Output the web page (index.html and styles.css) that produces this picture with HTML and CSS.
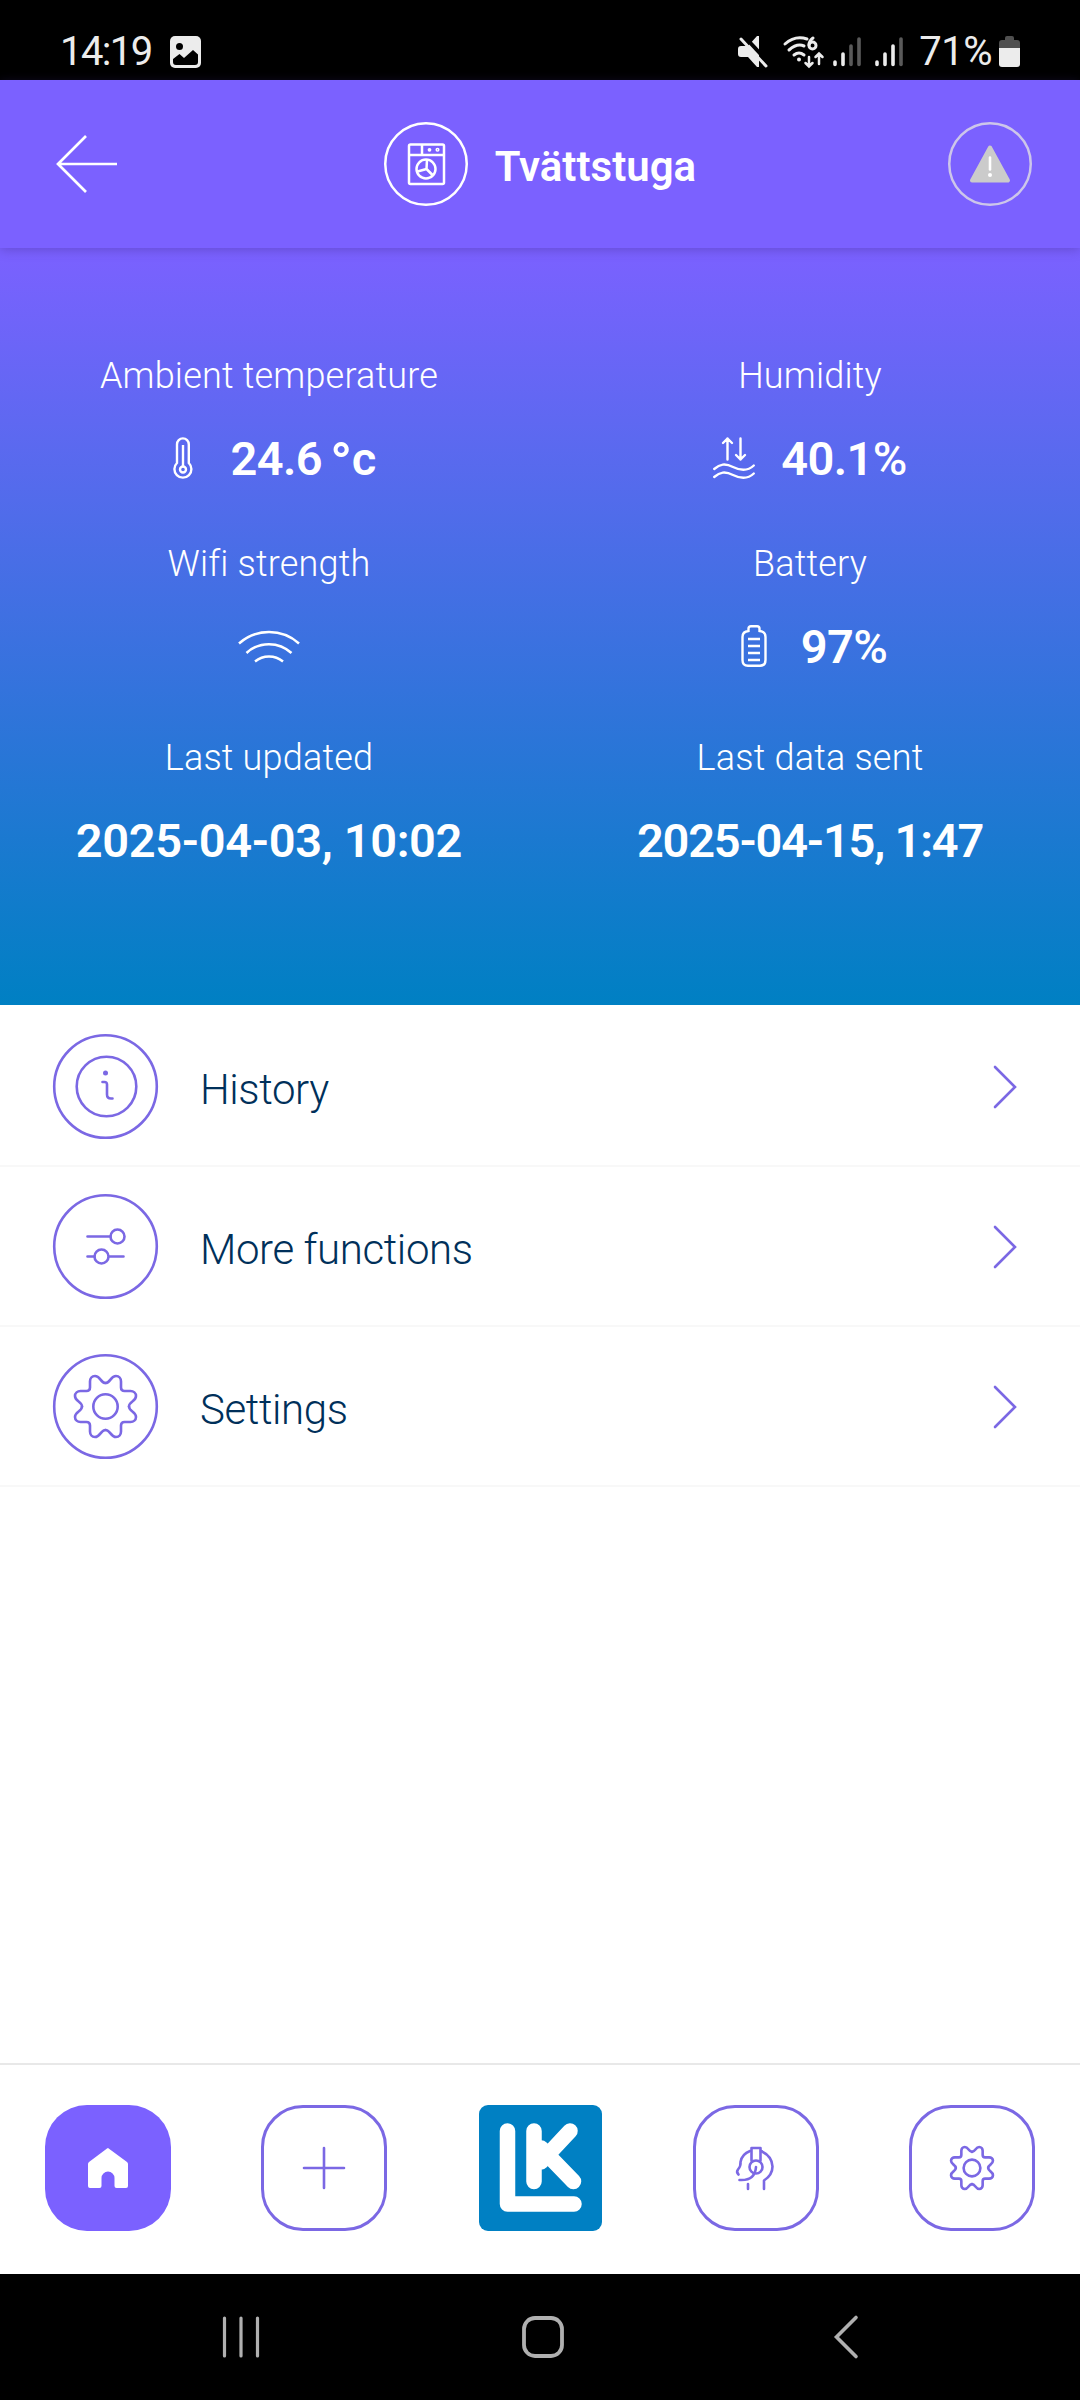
FILE: index.html
```
<!DOCTYPE html>
<html lang="en">
<head>
    <meta charset="UTF-8">
    <meta name="viewport" content="width=device-width, initial-scale=1.0">
    <title>Tvättstuga</title>
    <link rel="stylesheet" href="styles.css">
</head>
<body>

<!-- Shared gear outline -->
<svg class="defs" width="0" height="0">
    <defs>
        <path id="gear-side" d="M0-23.5C-5-23.5-5-30.5-10.5-30.5C-13.5-30.5-15.5-28-15.5-25V-19Q-15.5-15.5-19-15.5H-25C-28-15.5-30.5-13.5-30.5-10.5C-30.5-5-23.5-5-23.5 0"/>
        <g id="gear">
            <use href="#gear-side"/>
            <use href="#gear-side" transform="rotate(90)"/>
            <use href="#gear-side" transform="rotate(180)"/>
            <use href="#gear-side" transform="rotate(270)"/>
            <circle r="12.2"/>
        </g>
    </defs>
</svg>

<!-- Status bar -->
<div class="status-bar">
    <span class="clock">14:19</span>
    <svg class="picture" width="32" height="32" viewBox="0 0 32 32">
        <rect width="31" height="32" rx="5" fill="#ececec"/>
        <circle cx="9.500" cy="10.500" r="3.500" fill="#000"/>
        <path d="M3 23L9.500 18L14 22L23 14L28 18.500V26Q28 29 25 29H6Q3 29 3 26Z" fill="#000"/>
    </svg>
    <div class="status-icons">
        <svg class="mute" width="30" height="32" viewBox="0 0 30 32">
            <path d="M21 0V31H19L10 21H3Q0 21 0 18V13Q0 10 3 10H10L19 0Z" fill="#ececec"/>
            <path d="M5-1L31 27" stroke="#000" stroke-width="4"/>
            <path d="M3 3L28 30" stroke="#ececec" stroke-width="3" stroke-linecap="round"/>
        </svg>
        <svg class="wifi6" width="42" height="32" viewBox="0 0 42 32" fill="none" stroke="#ececec" stroke-width="3" stroke-linecap="round">
            <path d="M2 8Q12-1 24 3M6 14Q14 7 21 10M11 19Q16 15 21 19"/>
            <circle cx="16" cy="23.500" r="1" stroke-width="2"/>
            <path d="M30 2Q26 5 26 9" />
            <circle cx="29.500" cy="9.500" r="3.500"/>
            <path d="M26 21V30M22.500 27L26 30.500L29.500 27M36 28V18M32.500 21L36 17.500L39.500 21" stroke-width="2.500"/>
        </svg>
        <svg class="signal" width="28" height="31" viewBox="0 0 28 31" stroke-width="3.600" stroke-linecap="round">
            <path d="M2 26V28.500M10 18V28.500" stroke="#ececec"/>
            <path d="M18 10V28.500M26 3V28.500" stroke="#5a5a5a"/>
        </svg>
        <svg class="signal second" width="28" height="31" viewBox="0 0 28 31" stroke-width="3.600" stroke-linecap="round">
            <path d="M2 26V28.500M10 18V28.500M18 10V28.500" stroke="#ececec"/>
            <path d="M26 3V28.500" stroke="#5a5a5a"/>
        </svg>
        <span class="percent">71%</span>
        <svg class="cell" width="21" height="31" viewBox="0 0 21 31">
            <path d="M6 2Q6 0 8 0H13Q15 0 15 2V4H18Q21 4 21 7V12H0V7Q0 4 3 4H6Z" fill="#505050"/>
            <path d="M0 12H21V28Q21 31 18 31H3Q0 31 0 28Z" fill="#ececec"/>
        </svg>
    </div>
</div>

<!-- App header -->
<header class="header">
    <svg class="back" width="62" height="60" viewBox="0 0 62 60" fill="none" stroke="#fff" stroke-width="2.700">
        <path d="M30 2L2 30L30 58M2 30H61"/>
    </svg>
    <div class="title">
        <svg width="84" height="84" viewBox="0 0 84 84" fill="none" stroke="#fff" stroke-width="2.500">
            <circle cx="42" cy="42" r="40.750"/>
            <rect x="25" y="22.500" width="35" height="39.500" rx="1.500"/>
            <path d="M25 33H60M38 22.500V33"/>
            <circle cx="45.500" cy="27.800" r=".9" stroke-width="2"/>
            <circle cx="53.500" cy="27.800" r="1.300" stroke-width="1.500"/>
            <circle cx="42" cy="47" r="9.500"/>
            <path d="M42.500 47L43 37.500M42.500 47L33.500 49.500M42.500 47L49 53.500"/>
        </svg>
        <h1>Tvättstuga</h1>
    </div>
    <svg class="alert" width="84" height="84" viewBox="0 0 84 84">
        <circle cx="42" cy="42" r="40.750" fill="none" stroke="#cdc6ea" stroke-width="2.500"/>
        <path d="M42 25.500L60 58.500H24Z" fill="#cbcbcb" stroke="#cbcbcb" stroke-width="4" stroke-linejoin="round"/>
        <path d="M42 35.500V47.500" stroke="#fff" stroke-width="2.600" stroke-linecap="round"/>
        <circle cx="42" cy="53" r="2" fill="#fff"/>
    </svg>
</header>

<!-- Sensor readings -->
<section class="readings">
    <div class="reading">
        <p class="label">Ambient temperature</p>
        <div class="value">
            <svg width="42" height="42" viewBox="-11 0 42 42" fill="none" stroke="#fff" stroke-width="2.400">
                <path d="M4 26V7.500A5.800 6 0 0 1 15.800 7.500V26A8.500 8.500 0 1 1 4 26Z"/>
                <path d="M10 8V29"/>
                <circle cx="10" cy="32.500" r="3"/>
            </svg>
            <span>24.6<span class="degree">°</span>c</span>
        </div>
    </div>
    <div class="reading">
        <p class="label">Humidity</p>
        <div class="value">
            <svg width="42" height="42" viewBox="0 0 42 42" fill="none" stroke="#fff" stroke-width="2.400" stroke-linecap="round" stroke-linejoin="round">
                <path d="M14.500 22.500V1.500M10 6L14.500 1.500L19 6M27.500 1.500V22.500M23 18L27.500 22.500L32 18"/>
                <path d="M1.200 32C7 27 12 26 20 30S35 34 40.800 28.500M1.200 40C7 35 12 34 20 38S35 42 40.800 36.500"/>
            </svg>
            <span>40.1<span class="pct">%</span></span>
        </div>
    </div>
    <div class="reading">
        <p class="label">Wifi strength</p>
        <div class="value">
            <svg width="62" height="34" viewBox="0 0 62 34" fill="none" stroke="#fff" stroke-width="2.500">
                <path d="M1 14.500A45 45 0 0 1 61 14.500M8.500 24A33 33 0 0 1 53.500 24M17 32.500A22 22 0 0 1 45 32.500"/>
            </svg>
        </div>
    </div>
    <div class="reading">
        <p class="label">Battery</p>
        <div class="value">
            <svg width="42" height="42" viewBox="-8 0 42 42" fill="none" stroke="#fff" stroke-width="2.400">
                <path d="M7.500 6V3.500Q7.500 1.200 10 1.200H16Q18.500 1.200 18.500 3.500V6Q24.500 6.500 24.500 12V35Q24.500 40.800 19 40.800H7Q1.500 40.800 1.500 35V12Q1.500 6.500 7.500 6Z"/>
                <path d="M7 14H19M7 21H19M7 28H19M7 35H19"/>
            </svg>
            <span>97<span class="pct">%</span></span>
        </div>
    </div>
    <div class="reading">
        <p class="label">Last updated</p>
        <div class="value date"><span>2025-04-03, 10:02</span></div>
    </div>
    <div class="reading">
        <p class="label">Last data sent</p>
        <div class="value date sent"><span>2025-04-15, 1:47</span></div>
    </div>
</section>

<!-- Menu -->
<main class="menu">
    <div class="menu-item">
        <svg class="icon" width="105" height="105" viewBox="-52.5 -52.5 105 105">
            <circle r="51.300"/>
            <circle cx="1" r="29.800"/>
            <path d="M-3-4.500H-1Q1.500-4.500 1.500-2V8Q1.500 12 5.500 12H7"/>
            <circle class="dot" cx="0" cy="-13.500" r="2.500"/>
        </svg>
        <span>History</span>
        <svg class="chevron" width="24" height="44" viewBox="0 0 24 44"><path d="M2 2L22 22L2 42"/></svg>
    </div>
    <div class="menu-item">
        <svg class="icon" width="105" height="105" viewBox="-52.5 -52.5 105 105">
            <circle r="51.300"/>
            <path d="M-18-10H5M-18 10H-11M4 10H18"/>
            <circle cx="12" cy="-10" r="7"/>
            <circle cx="-4" cy="10" r="7"/>
        </svg>
        <span>More functions</span>
        <svg class="chevron" width="24" height="44" viewBox="0 0 24 44"><path d="M2 2L22 22L2 42"/></svg>
    </div>
    <div class="menu-item">
        <svg class="icon" width="105" height="105" viewBox="-52.5 -52.5 105 105">
            <circle r="51.300"/>
            <use href="#gear"/>
        </svg>
        <span>Settings</span>
        <svg class="chevron" width="24" height="44" viewBox="0 0 24 44"><path d="M2 2L22 22L2 42"/></svg>
    </div>
</main>

<!-- Tab bar -->
<nav class="tabs">
    <div class="tab active">
        <svg width="40" height="42" viewBox="0 0 40 42">
            <path d="M20 1L39 15Q40 16 40 17V39Q40 41 38 41H28.500Q26.500 41 26.500 39V31A6.500 6.500 0 0 0 13.500 31V39Q13.500 41 11.500 41H2Q0 41 0 39V17Q0 16 1 15L19 1.500Q20 .5 21 1.500Z" fill="#fff"/>
        </svg>
    </div>
    <div class="tab">
        <svg width="42" height="42" viewBox="0 0 42 42"><path d="M21 1V41M1 21H41"/></svg>
    </div>
    <div class="tab logo">
        <svg width="123" height="126" viewBox="0 0 123 126">
            <rect width="123" height="126" rx="9" fill="#0080c3"/>
            <g fill="none" stroke="#fff" stroke-width="15.500" stroke-linecap="round">
                <path d="M28.500 26V99H95" stroke-linejoin="round"/>
                <path d="M55 26V76.500M91 26L62 57"/>
                <path d="M62 43L94.500 76.500"/>
            </g>
        </svg>
    </div>
    <div class="tab">
        <svg width="42" height="42" viewBox="0 0 42 42">
            <path d="M15 4Q7 7 5.500 15Q6 19 3 22.500Q1 25 3.500 27.500M4.500 33Q20 34 21 20"/>
            <path d="M26 4Q37 9 37.500 19.500Q37.500 28 29 33.500V42M13 37V42"/>
            <path d="M16.500 13.500V1H25.500V13.500"/>
            <circle cx="21" cy="20" r="6.500"/>
        </svg>
    </div>
    <div class="tab">
        <svg width="44" height="44" viewBox="-32 -32 64 64" class="small-gear"><use href="#gear"/></svg>
    </div>
</nav>

<!-- System navigation -->
<div class="system-nav">
    <svg width="36" height="44" viewBox="0 0 36 44"><path d="M1.500 3V41M18 3V41M34.500 3V41" stroke-width="3.200"/></svg>
    <svg class="home" width="44" height="44" viewBox="0 0 44 44"><rect x="3" y="3" width="38" height="38" rx="11" stroke-width="3.800"/></svg>
    <svg width="26" height="44" viewBox="0 0 26 44"><path d="M23 2.500L3.500 22L23 41.500" stroke-width="3.600"/></svg>
</div>

</body>
</html>
```
FILE: styles.css
```
* {
    box-sizing: border-box;
}
body {
    margin: 0;
    width: 1080px;
    height: 2400px;
    display: flex;
    flex-direction: column;
    overflow: hidden;
    background-color: #fff;
    font-family: Roboto, "Liberation Sans", sans-serif;
}
svg {
    display: block;
    flex: none;
    overflow: visible;
}
.defs {
    position: absolute;
}

/* Status bar */
.status-bar {
    height: 80px;
    display: flex;
    align-items: center;
    padding: 23px 60px 0;
    background-color: #000;
    color: #ececec;
    font-size: 40px;
}
.clock {
    width: 110px;
    letter-spacing: -1.6px;
}
.status-icons {
    display: flex;
    align-items: center;
    margin-left: auto;
}
.wifi6 {
    margin-left: 15px;
}
.signal {
    margin-left: 8px;
}
.second {
    margin-left: 14px;
}
.percent {
    margin-left: 16px;
    letter-spacing: -0.5px;
}
.cell {
    margin-left: 7px;
}

/* Header */
.header {
    position: relative;
    z-index: 1;
    height: 168px;
    display: flex;
    align-items: center;
    justify-content: space-between;
    padding: 0 48px 0 56px;
    background-color: #7b61ff;
    box-shadow: 0 2px 10px rgba(60, 40, 130, 0.35);
}
.title {
    display: flex;
    align-items: center;
    gap: 27px;
    margin-left: 14px;
}
h1 {
    margin: 4px 0 0;
    color: #fff;
    font-size: 42px;
    font-weight: 600;
}

/* Readings */
.readings {
    height: 757px;
    display: grid;
    grid-template-columns: 538px 544px;
    grid-template-rows: 188px 194px 1fr;
    padding-top: 100px;
    background: linear-gradient(#7b61ff, #0080c3);
    color: #fff;
}
.reading {
    display: flex;
    flex-direction: column;
    align-items: center;
}
.label {
    margin: 0;
    height: 56px;
    line-height: 56px;
    font-size: 36px;
    font-weight: 350;
    letter-spacing: 0.2px;
}
.value {
    height: 56px;
    margin-top: 26px;
    display: flex;
    align-items: center;
    gap: 26px;
    font-size: 47px;
    font-weight: 600;
    letter-spacing: -0.6px;
    white-space: nowrap;
}
.degree {
    margin-left: 8px;
    font-size: 58px;
    line-height: 40px;
    vertical-align: -8px;
}
.pct {
    font-weight: 500;
}
.date {
    letter-spacing: -0.35px;
}
.sent {
    letter-spacing: -1.2px;
}

/* Menu */
.menu {
    flex: 1;
    padding-top: 2px;
}
.menu-item {
    height: 160px;
    display: flex;
    align-items: center;
    padding: 0 63px 0 53px;
    border-bottom: 2px solid #f8f8f8;
    color: #00305a;
    font-size: 42px;
    font-weight: 350;
}
.menu-item span {
    margin: 6px 0 0 42px;
    letter-spacing: -0.4px;
}
.icon,
.chevron {
    fill: none;
    stroke: #7b68e4;
    stroke-width: 2.6;
    stroke-linecap: round;
}
.icon .dot {
    fill: #7b68e4;
    stroke: none;
}
.chevron {
    margin: 2px 0 0 auto;
}

/* Tab bar */
.tabs {
    height: 211px;
    display: flex;
    justify-content: space-between;
    padding: 40px 45px 0;
    border-top: 2px solid #e8e8e8;
    background-color: #fff;
}
.tab {
    width: 126px;
    height: 126px;
    display: flex;
    align-items: center;
    justify-content: center;
    border: 3px solid #7b68e4;
    border-radius: 42px;
    fill: none;
    stroke: #7b68e4;
    stroke-width: 2.6;
    stroke-linecap: round;
    stroke-linejoin: round;
}
.active {
    border: none;
    background-color: #7b61ff;
    stroke: none;
}
.logo {
    border: none;
    stroke: none;
}
.small-gear {
    stroke-width: 3.8;
}

/* System navigation */
.system-nav {
    height: 126px;
    display: flex;
    align-items: center;
    justify-content: space-between;
    padding: 0 221px 0 223px;
    background-color: #000;
    fill: none;
    stroke: #b0b0b0;
    stroke-linecap: round;
}
.home {
    margin-right: 6px;
}
```
